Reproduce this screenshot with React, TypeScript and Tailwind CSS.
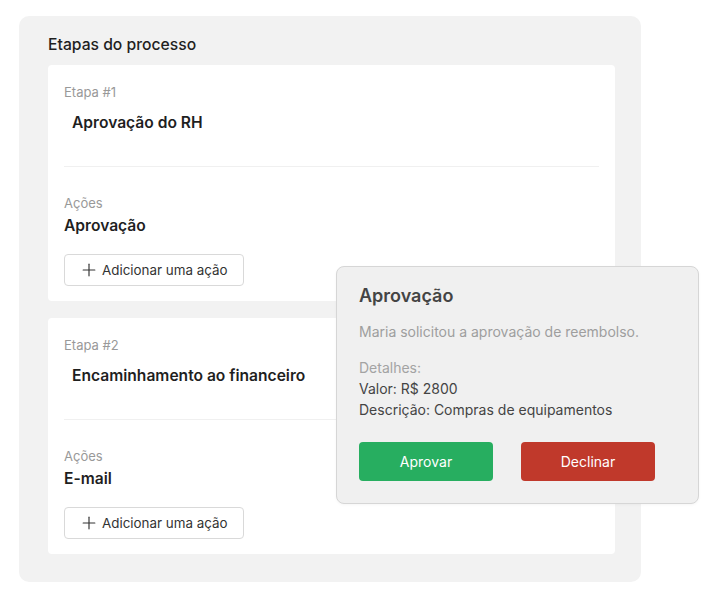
import { Plus } from "lucide-react";

interface Etapa {
  id: number;
  nome: string;
  acao: string;
}

const etapas: Etapa[] = [
  { id: 1, nome: "Aprovação do RH", acao: "Aprovação" },
  { id: 2, nome: "Encaminhamento ao financeiro", acao: "E-mail" },
];

function EtapaCard({ etapa }: { etapa: Etapa }) {
  return (
    <div className="bg-white rounded-[4px] pl-4 pr-4 pt-[18px] pb-[15px]">
      <div className="text-[13px] leading-[18px] text-[#999999]">Etapa #{etapa.id}</div>
      <div className="mt-[11px] pl-2 text-[15.6px] leading-[22px] font-semibold text-[#1f1f1f]">
        {etapa.nome}
      </div>
      <div className="mt-[32px] h-px bg-[#f0f0f0]" />
      <div className="mt-[27px] text-[13px] leading-[18px] text-[#999999]">Ações</div>
      <div className="mt-[3px] text-[15.6px] leading-[22px] font-semibold text-[#1f1f1f]">
        {etapa.acao}
      </div>
      <button className="mt-[17px] h-8 w-[180px] flex items-center gap-[3px] pl-[14px] border border-[#d9d9d9] rounded-[4px] bg-white text-[13.4px] text-[#333333]">
        <Plus className="w-5 h-5" strokeWidth={1.4} />
        Adicionar uma ação
      </button>
    </div>
  );
}

export default function App() {
  return (
    <div
      className="relative w-[728px] h-[599px] bg-white"
      style={{ fontFamily: "Inter, 'Noto Sans', sans-serif" }}
    >
      <div className="absolute left-[19px] top-4 w-[622px] bg-[#f2f2f2] rounded-[10px] pl-[29px] pr-[26px] pt-[19px] pb-[28px]">
        <h2 className="text-[15.7px] leading-5 font-medium text-[#1f1f1f]">Etapas do processo</h2>
        <div className="mt-[10px] flex flex-col gap-[17px]">
          {etapas.map((e) => (
            <EtapaCard key={e.id} etapa={e} />
          ))}
        </div>
      </div>

      {/* popup de aprovação */}
      <div className="absolute left-[336px] top-[266px] w-[363px] h-[238px] bg-[#f0f0f0] border border-[#d6d6d6] rounded-[8px] pl-[22px] pt-[17px] shadow-[0_1px_3px_rgba(0,0,0,0.04)]">
        <div className="text-[18px] leading-6 font-semibold text-[#444444]">Aprovação</div>
        <div className="mt-[14px] text-[14px] leading-5 text-[#9e9e9e]">
          Maria solicitou a aprovação de reembolso.
        </div>
        <div className="mt-[15px] text-[14px] leading-[21px]">
          <div className="text-[#a3a3a3]">Detalhes:</div>
          <div className="text-[#444444]">Valor: R$ 2800</div>
          <div className="text-[#444444]">Descrição: Compras de equipamentos</div>
        </div>
        <div className="mt-[22px] flex gap-[28px]">
          <button className="w-[134px] h-[39px] rounded-[4px] bg-[#27ae60] text-white text-[14px]">
            Aprovar
          </button>
          <button className="w-[134px] h-[39px] rounded-[4px] bg-[#c0392b] text-white text-[14px]">
            Declinar
          </button>
        </div>
      </div>
    </div>
  );
}
